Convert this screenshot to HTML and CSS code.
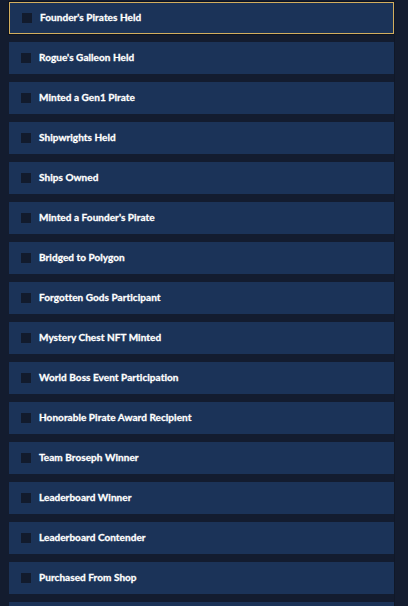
FILE: index.html
```html
<!DOCTYPE html>
<html lang="en">
<head>
  <meta charset="UTF-8">
  <meta name="viewport" content="width=device-width, initial-scale=1.0">
  <title>Achievements</title>
  <link rel="stylesheet" href="styles.css">
</head>
<body>
  <div class="wrap">
    <ul class="achievements">
      <li class="item selected"><span class="box"></span><span class="label">Founder's Pirates Held</span></li>
      <li class="item"><span class="box"></span><span class="label">Rogue's Galleon Held</span></li>
      <li class="item"><span class="box"></span><span class="label">Minted a Gen1 Pirate</span></li>
      <li class="item"><span class="box"></span><span class="label">Shipwrights Held</span></li>
      <li class="item"><span class="box"></span><span class="label">Ships Owned</span></li>
      <li class="item"><span class="box"></span><span class="label">Minted a Founder's Pirate</span></li>
      <li class="item"><span class="box"></span><span class="label">Bridged to Polygon</span></li>
      <li class="item"><span class="box"></span><span class="label">Forgotten Gods Participant</span></li>
      <li class="item"><span class="box"></span><span class="label">Mystery Chest NFT Minted</span></li>
      <li class="item"><span class="box"></span><span class="label">World Boss Event Participation</span></li>
      <li class="item"><span class="box"></span><span class="label">Honorable Pirate Award Recipient</span></li>
      <li class="item"><span class="box"></span><span class="label">Team Broseph Winner</span></li>
      <li class="item"><span class="box"></span><span class="label">Leaderboard Winner</span></li>
      <li class="item"><span class="box"></span><span class="label">Leaderboard Contender</span></li>
      <li class="item"><span class="box"></span><span class="label">Purchased From Shop</span></li>
      <li class="item"></li>
    </ul>
    <div class="track"></div>
  </div>
</body>
</html>
```
FILE: styles.css
```css
:root {
  --bg: #131c2f;
  --row: #1b3358;
  --box: #121b2d;
  --gold: #d2ae5f;
  --text: #ffffff;
}
html, body {
  margin: 0;
  padding: 0;
  height: 100%;
  overflow: hidden;
  background: var(--bg);
}
.wrap {
  display: flex;
  height: 100%;
}
.achievements {
  list-style: none;
  margin: 0;
  padding: 2px 0 0 9px;
  width: 386px;
  display: flex;
  flex-direction: column;
  gap: 8px;
}
.item {
  height: 32px;
  box-sizing: border-box;
  background: var(--row);
  display: flex;
  align-items: center;
  padding-left: 12px;
  flex-shrink: 0;
}
/* highlighted entry */
.item.selected {
  border: 1px solid var(--gold);
  box-shadow: 0 0 0 1px #0c1220;
}
.box {
  width: 10px;
  height: 10px;
  background: var(--box);
  flex-shrink: 0;
}
.label {
  margin-left: 8px;
  padding-bottom: 2px;
  color: var(--text);
  font-family: Lato, "Open Sans", sans-serif;
  font-weight: 700;
  font-size: 10px;
  letter-spacing: 0.05px;
  -webkit-text-stroke: 0.3px var(--text);
  line-height: 1;
}
.track {
  width: 13px;
  background: #141d30;
  border-left: 1px solid #101828;
}
```
